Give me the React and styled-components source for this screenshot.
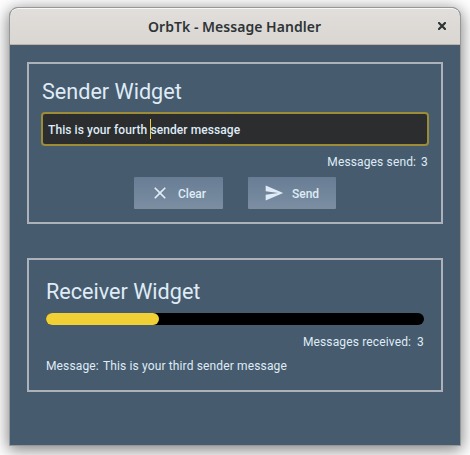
import React from "react";
import styled, { createGlobalStyle } from "styled-components";

const GlobalStyle = createGlobalStyle`
  * { box-sizing: border-box; }
  body {
    margin: 0;
    background: #fff;
    font-family: Roboto, "Liberation Sans", sans-serif;
    overflow: hidden;
  }
`;

const Desktop = styled.div`
  width: 470px;
  height: 455px;
  padding: 7px 9px 9px;
  overflow: hidden;
`;

const Window = styled.main`
  width: 452px;
  height: 439px;
  border: 1px solid #959798;
  border-radius: 9px 9px 0 0;
  overflow: hidden;
  background: #475b6e;
  box-shadow: 0 3px 16px 1px rgba(0, 0, 0, 0.5);
`;

const TitleBar = styled.header`
  display: grid;
  grid-template-columns: 36px 1fr 36px;
  align-items: center;
  height: 37px;
  border-bottom: 1px solid #bfb2a7;
  border-radius: 8px 8px 0 0;
  background: linear-gradient(#e1dedb, #dad6d2);
  box-shadow: inset 0 1px #f8f7f6;
  color: #2e3436;
`;

const Title = styled.h1`
  grid-column: 2;
  margin: 0;
  padding: 1px 1px 0 0;
  text-align: center;
  white-space: nowrap;
  font: 600 14px/20px "Noto Sans", sans-serif;
  letter-spacing: 0.03px;
`;

const CloseButton = styled.button`
  display: flex;
  justify-content: center;
  padding: 0;
  border: 0;
  background: none;
  color: inherit;
`;

const Body = styled.div`
  display: flex;
  flex-direction: column;
  gap: 34px;
  padding: 17px;
`;

const Panel = styled.section`
  height: ${(p) => p.$height}px;
  padding: ${(p) => p.$padding};
  border: 2px solid #adb1b9;
  color: #dfebf6;
`;

const Heading = styled.h2`
  margin: 0;
  padding-left: ${(p) => p.$indent || 0}px;
  font-size: 21.6px;
  font-weight: 400;
  line-height: 28px;
  white-space: nowrap;
`;

const Field = styled.div`
  display: flex;
  align-items: center;
  height: 34px;
  margin-top: 6px;
  padding: 1px 5px 0;
  border: 2px solid #9c8b37;
  border-radius: 4px;
  background: #2c2d2f;
  font-size: 12px;
  font-weight: 500;
  letter-spacing: 0.08px;
  white-space: pre;
`;

const Caret = styled.span`
  flex: none;
  width: 1px;
  height: 20px;
  margin: -1px -1px 0 0;
  background: #f0d034;
`;

const Status = styled.div`
  display: flex;
  justify-content: ${(p) => (p.$end ? "flex-end" : "flex-start")};
  gap: ${(p) => p.$gap}px;
  margin-top: ${(p) => p.$top}px;
  padding-right: ${(p) => p.$inset || 0}px;
  font-size: 12px;
  line-height: 16px;
  white-space: nowrap;
  letter-spacing: 0.14px;
`;

const Actions = styled.div`
  display: flex;
  gap: 25px;
  margin: 7px 0 0 93px;
`;

const Button = styled.button`
  display: flex;
  align-items: center;
  gap: 8px;
  width: ${(p) => p.$width}px;
  height: 32px;
  padding: 0 0 0 16px;
  border: 0;
  border-radius: 1px;
  background: linear-gradient(#687d94, #7b8ea2);
  color: #dfebf6;
  font: 500 12px/16px Roboto, sans-serif;
`;

const Label = styled.span`
  padding-top: 2px;
`;

const Icon = styled.svg`
  display: block;
  flex: none;
  fill: currentColor;
`;

const Track = styled.div`
  height: 12px;
  margin-top: 7px;
  border-radius: 6px;
  background: #000;
`;

const Progress = styled.div`
  width: ${(p) => p.$value}%;
  height: 100%;
  border-radius: 6px;
  background: #f0d034;
`;

export default function App() {
  return (
    <Desktop>
      <GlobalStyle />
      <Window>
        <TitleBar>
          <Title>OrbTk - Message Handler</Title>
          <CloseButton aria-label="Close">
            <Icon width="8" height="8" viewBox="0 0 8 8">
              <path d="M1 1l6 6M7 1l-6 6" stroke="currentColor" strokeWidth="2.2" strokeLinecap="square" />
            </Icon>
          </CloseButton>
        </TitleBar>
        <Body>
          <Panel $height={162} $padding="14px 12px 0">
            <Heading $indent={1}>Sender Widget</Heading>
            <Field>
              <span>This is your fourth </span>
              <Caret />
              <span>sender message</span>
            </Field>
            <Status $end $gap={5} $top={8} $inset={1}>
              <span>Messages send:</span>
              <span>3</span>
            </Status>
            <Actions>
              <Button $width={89}>
                <Icon width="20" height="20" viewBox="0 0 24 24">
                  <path d="M19 6.41L17.59 5 12 10.59 6.41 5 5 6.41 10.59 12 5 17.59 6.41 19 12 13.41 17.59 19 19 17.59 13.41 12z" />
                </Icon>
                <Label>Clear</Label>
              </Button>
              <Button $width={88}>
                <Icon width="20" height="20" viewBox="0 0 24 24">
                  <path d="M2.01 21L23 12 2.01 3 2 10l15 2-15 2z" />
                </Icon>
                <Label>Send</Label>
              </Button>
            </Actions>
          </Panel>
          <Panel $height={134} $padding="18px 17px 0">
            <Heading>Receiver Widget</Heading>
            <Track>
              <Progress $value={30} />
            </Track>
            <Status $end $gap={6} $top={9}>
              <span>Messages received:</span>
              <span>3</span>
            </Status>
            <Status $gap={4} $top={8}>
              <span>Message:</span>
              <span>This is your third sender message</span>
            </Status>
          </Panel>
        </Body>
      </Window>
    </Desktop>
  );
}
